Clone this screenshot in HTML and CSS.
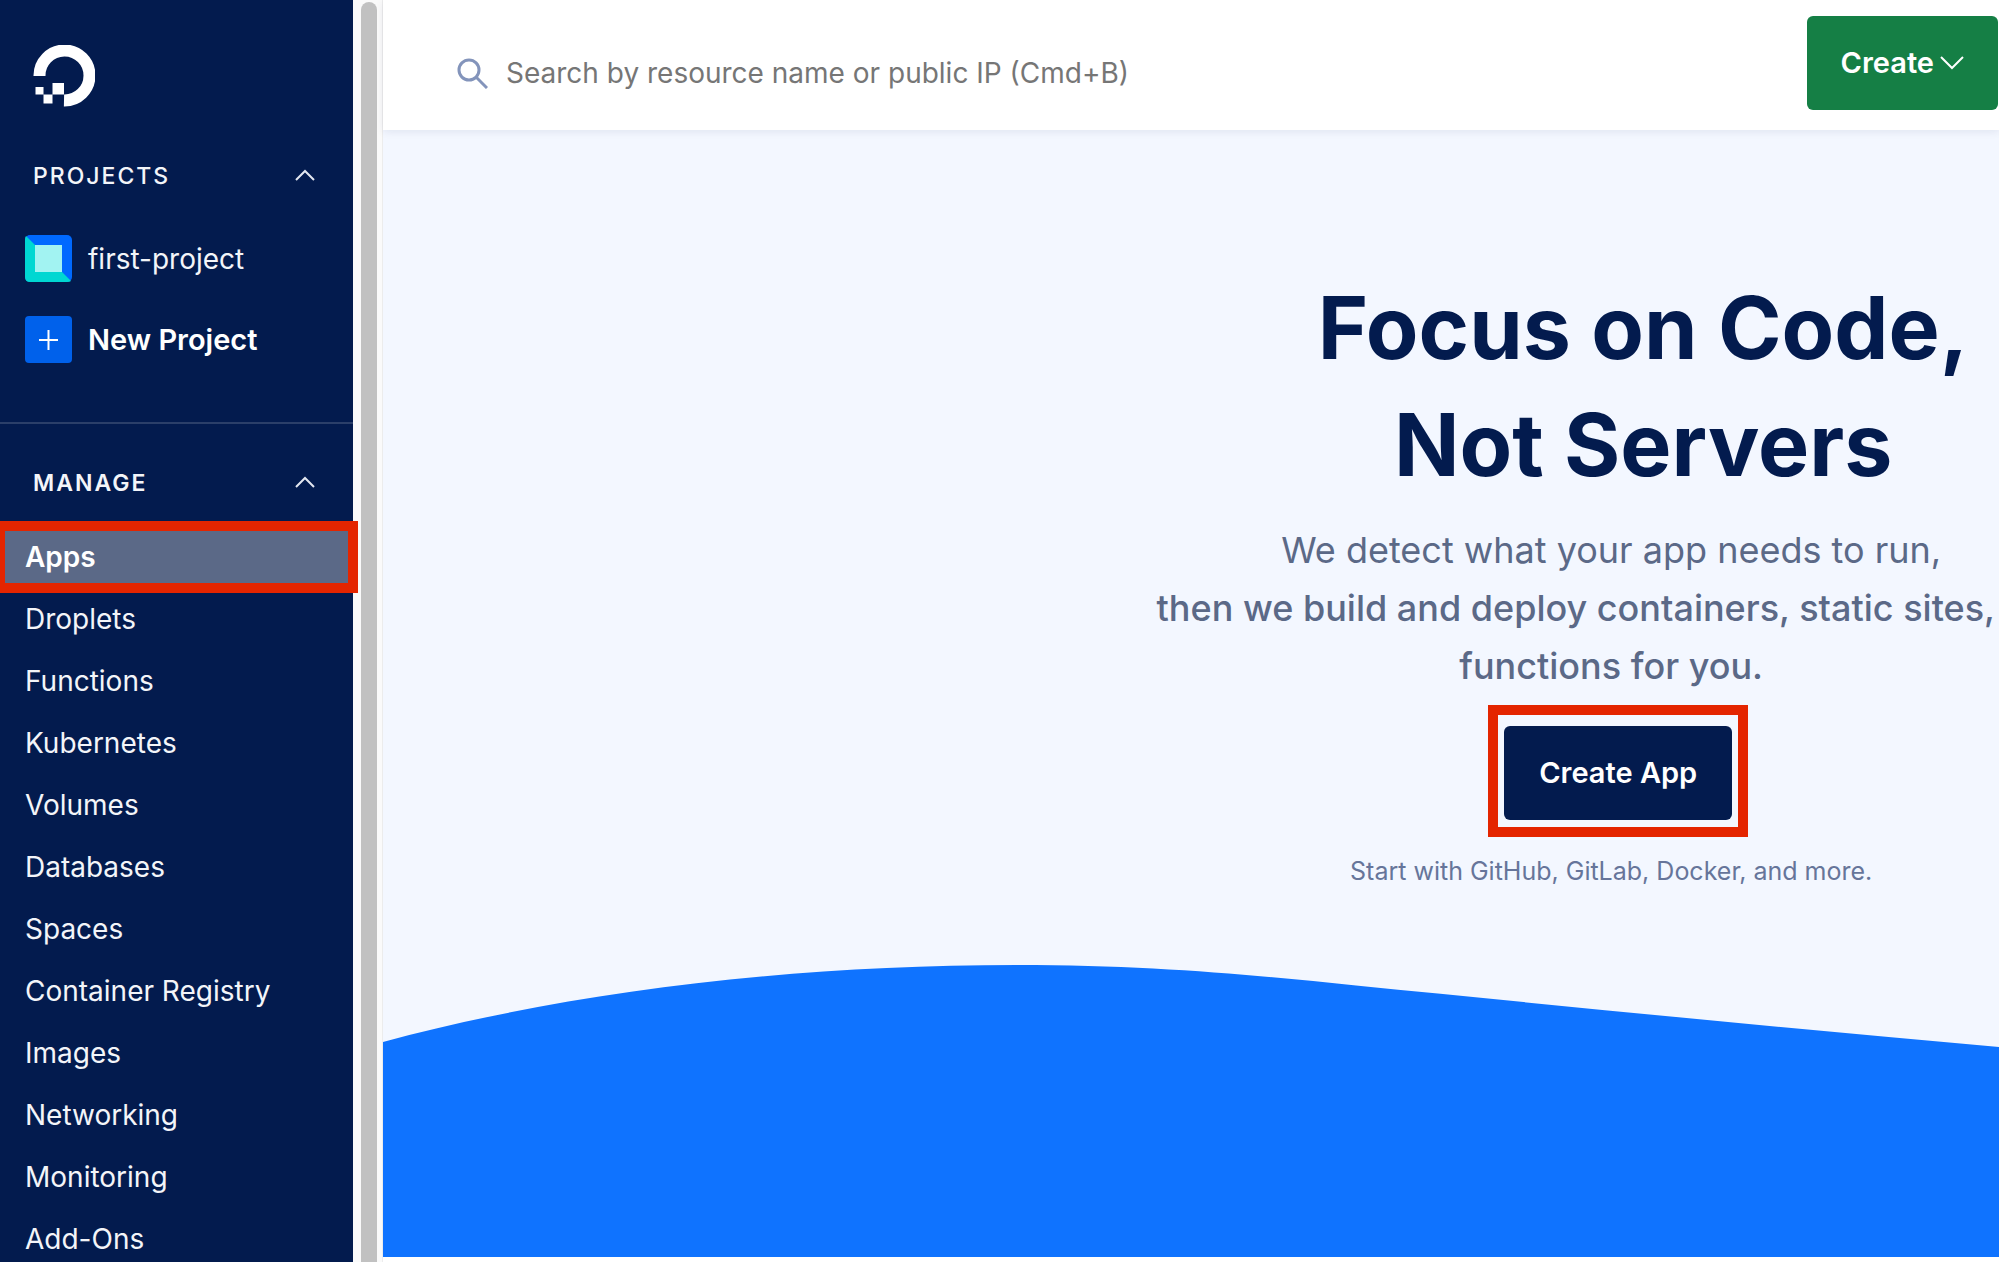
FILE: index.html
```
<!DOCTYPE html>
<html lang="en">
<head>
<meta charset="utf-8">
<meta name="viewport" content="width=device-width, initial-scale=1">
<title>Apps - DigitalOcean</title>
<link rel="stylesheet" href="styles.css">
</head>
<body>
<div class="app">
  <nav class="sidebar">
    <a class="logo" href="#" aria-label="DigitalOcean">
      <svg viewBox="0 0 62 62" width="62" height="62" aria-hidden="true">
        <path fill="none" stroke="#fff" stroke-width="12" d="M6.500 31A25 25 0 1 1 31 55.500"/>
        <path fill="#fff" d="M19.500 38h11.500v11.500H19.500zM10.500 49.500h9v9h-9zM2.500 42h8v7.500h-8z"/>
      </svg>
    </a>

    <button class="section" type="button" aria-expanded="true">
      PROJECTS
      <svg viewBox="0 0 20 14" width="20" height="14" aria-hidden="true"><path d="M1 11l9-9 9 9"/></svg>
    </button>
    <ul class="projects">
      <li><a class="project" href="#">
        <svg viewBox="0 0 47 47" width="47" height="47" aria-hidden="true">
          <rect width="47" height="47" rx="5" fill="#0069ff"/>
          <path fill="#00d7d2" d="M1 1L46 46Q45 47 42 47H5Q0 47 0 42V5Q0 2 1 1z"/>
          <path fill="#a2f3f2" d="M10 10h27v27H10z"/>
        </svg>
        first-project</a></li>
      <li><a class="project project-new" href="#">
        <svg viewBox="0 0 47 47" width="47" height="47" aria-hidden="true">
          <rect width="47" height="47" rx="4" fill="#0061eb"/>
          <path stroke="#fff" stroke-width="2" d="M14 24h19M23.500 14v20"/>
        </svg>
        New Project</a></li>
    </ul>

    <hr class="divider">

    <button class="section" type="button" aria-expanded="true">
      MANAGE
      <svg viewBox="0 0 20 14" width="20" height="14" aria-hidden="true"><path d="M1 11l9-9 9 9"/></svg>
    </button>
    <ul class="manage">
      <li><a class="active" href="#" aria-current="page">Apps</a></li>
      <li><a href="#">Droplets</a></li>
      <li><a href="#">Functions</a></li>
      <li><a href="#">Kubernetes</a></li>
      <li><a href="#">Volumes</a></li>
      <li><a href="#">Databases</a></li>
      <li><a href="#">Spaces</a></li>
      <li><a href="#">Container Registry</a></li>
      <li><a href="#">Images</a></li>
      <li><a href="#">Networking</a></li>
      <li><a href="#">Monitoring</a></li>
      <li><a href="#">Add-Ons</a></li>
    </ul>
  </nav>

  <div class="scrollbar" aria-hidden="true"><div class="thumb"></div></div>

  <div class="content">
    <header class="topbar">
      <form class="search" role="search">
        <svg viewBox="0 0 32 32" width="32" height="32" aria-hidden="true"><circle cx="13" cy="13" r="10"/><path d="M20 20l11 11"/></svg>
        <input type="search" aria-label="Search" placeholder="Search by resource name or public IP (Cmd+B)">
      </form>
      <button class="button create" type="button">Create
        <svg viewBox="0 0 24 14" width="24" height="14" aria-hidden="true"><path d="M1 1l11 11L23 1"/></svg>
      </button>
    </header>
    <main class="hero">
      <div class="copy">
        <h1>Focus on Code,<br>Not Servers</h1>
        <p class="lead">
          <span>We detect what your app needs to run,</span>
          <strong class="wide">then we build and deploy containers, static sites,</strong>
          <strong>functions for you.</strong>
        </p>
        <div class="action"><button class="button create-app" type="button">Create App</button></div>
        <p class="hint">Start with GitHub, GitLab, Docker, and more.</p>
      </div>
      <svg class="wave" viewBox="0 0 1616 292" preserveAspectRatio="none" aria-hidden="true">
        <path d="M0 77C170 31 390 0 634 0C770 0 870 10 973 20.500C1180 41 1400 63 1616 82V292H0z"/>
      </svg>
    </main>
  </div>
</div>
</body>
</html>
```
FILE: styles.css
```
* {
  box-sizing: border-box;
}

body {
  margin: 0;
  background: #fff;
  color: #031b4e;
  font: 28px/34px Inter, "Open Sans", sans-serif;
}

ul,
p,
h1 {
  margin: 0;
  padding: 0;
}

ul {
  list-style: none;
}

a {
  color: inherit;
  text-decoration: none;
}

button {
  border: 0;
  font: inherit;
  color: inherit;
  cursor: pointer;
}

.app {
  display: flex;
  min-height: 100vh;
}

/* Sidebar */

.sidebar {
  flex: none;
  width: 353px;
  padding: 45px 0 3px;
  background: #031b4e;
  color: #f3f5f9;
}

.logo {
  display: block;
  height: 62px;
  margin-left: 33px;
}

.logo svg {
  display: block;
}

.section {
  display: flex;
  align-items: center;
  justify-content: space-between;
  width: 100%;
  margin-top: 55px;
  padding: 0 38px 0 33px;
  background: none;
  font-size: 23px;
  font-weight: 500;
  line-height: 28px;
  letter-spacing: 2px;
}

.section svg {
  fill: none;
  stroke: #e3e7f0;
  stroke-width: 2;
}

.projects {
  display: grid;
  gap: 34px;
  padding: 45px 25px 0;
}

.project {
  display: flex;
  align-items: center;
  gap: 16px;
}

.project-new {
  color: #fff;
  font-size: 29px;
  font-weight: 600;
}

.divider {
  height: 2px;
  margin: 59px 0 0;
  border: 0;
  background: #2b3f69;
}

.divider + .section {
  margin-top: 45px;
  font-weight: 600;
}

.manage {
  display: grid;
  gap: 28px;
  padding-top: 43px;
}

.manage a {
  display: block;
  padding: 0 25px;
}

.manage .active {
  position: relative;
  margin: -10px 0;
  padding: 10px 25px;
  background: #5b6987;
  color: #fff;
  font-weight: 600;
}

/* Highlight frame drawn over the edges of the active item */
.manage .active::after {
  content: "";
  position: absolute;
  inset: -9px -5px;
  border: 10px solid #e42500;
}

.scrollbar {
  flex: none;
  display: flex;
  width: 30px;
  padding: 2px 5px 0 8px;
  border-right: 1px solid #ececec;
  background: #fafafa;
}

.thumb {
  width: 16px;
  border-radius: 8px 8px 0 0;
  background: #c1c1c1;
}

/* Main column */

.content {
  flex: 1;
  min-width: 0;
  display: flex;
  flex-direction: column;
  padding-bottom: 5px;
}

.topbar {
  position: relative;
  display: flex;
  align-items: flex-start;
  min-height: 130px;
  padding: 16px 1px 0 73px;
  background: #fff;
  box-shadow: 0 2px 8px rgba(3, 27, 78, 0.08);
}

.search {
  flex: 1;
  display: flex;
  align-items: center;
  gap: 18px;
  height: 114px;
}

.search svg {
  fill: none;
  stroke: #8394bb;
  stroke-width: 3;
}

.search input {
  flex: 1;
  min-width: 0;
  padding: 0;
  border: 0;
  outline: 0;
  background: none;
  color: #031b4e;
  font: inherit;
}

.search input::placeholder {
  color: #767676;
  opacity: 1;
}

.button {
  height: 94px;
  padding: 0 35px;
  border-radius: 6px;
  color: #fff;
  font-size: 29px;
  font-weight: 600;
}

.create {
  display: flex;
  align-items: center;
  gap: 6px;
  padding: 0 34px;
  background: #157f45;
}

.create svg {
  fill: none;
  stroke: #fff;
  stroke-width: 2;
}

.hero {
  flex: 1;
  display: flex;
  flex-direction: column;
  align-items: flex-end;
  justify-content: space-between;
  padding-top: 140px;
  background: #f3f7ff;
}

.copy {
  display: flex;
  flex-direction: column;
  align-items: center;
  width: 48%;
  text-align: center;
}

h1 {
  padding-left: 64px;
  font-size: 86px;
  font-weight: 700;
  line-height: 117px;
}

.lead {
  display: flex;
  flex-direction: column;
  align-items: center;
  width: 100%;
  margin-top: 17px;
  color: #5b6987;
  font-size: 36px;
  line-height: 58px;
  white-space: nowrap;
}

.lead strong {
  font-weight: 500;
}

.lead .wide {
  align-self: flex-end;
  padding-right: 4px;
}

.action {
  margin: 10px 0 17px 14px;
  padding: 11px 6px 7px;
  border: 10px solid #e42500;
}

.create-app {
  display: block;
  background: #031b4e;
}

.hint {
  color: #66759a;
  font-size: 25px;
}

.wave {
  display: block;
  width: 100%;
  height: 292px;
  fill: #0f73ff;
}
```
